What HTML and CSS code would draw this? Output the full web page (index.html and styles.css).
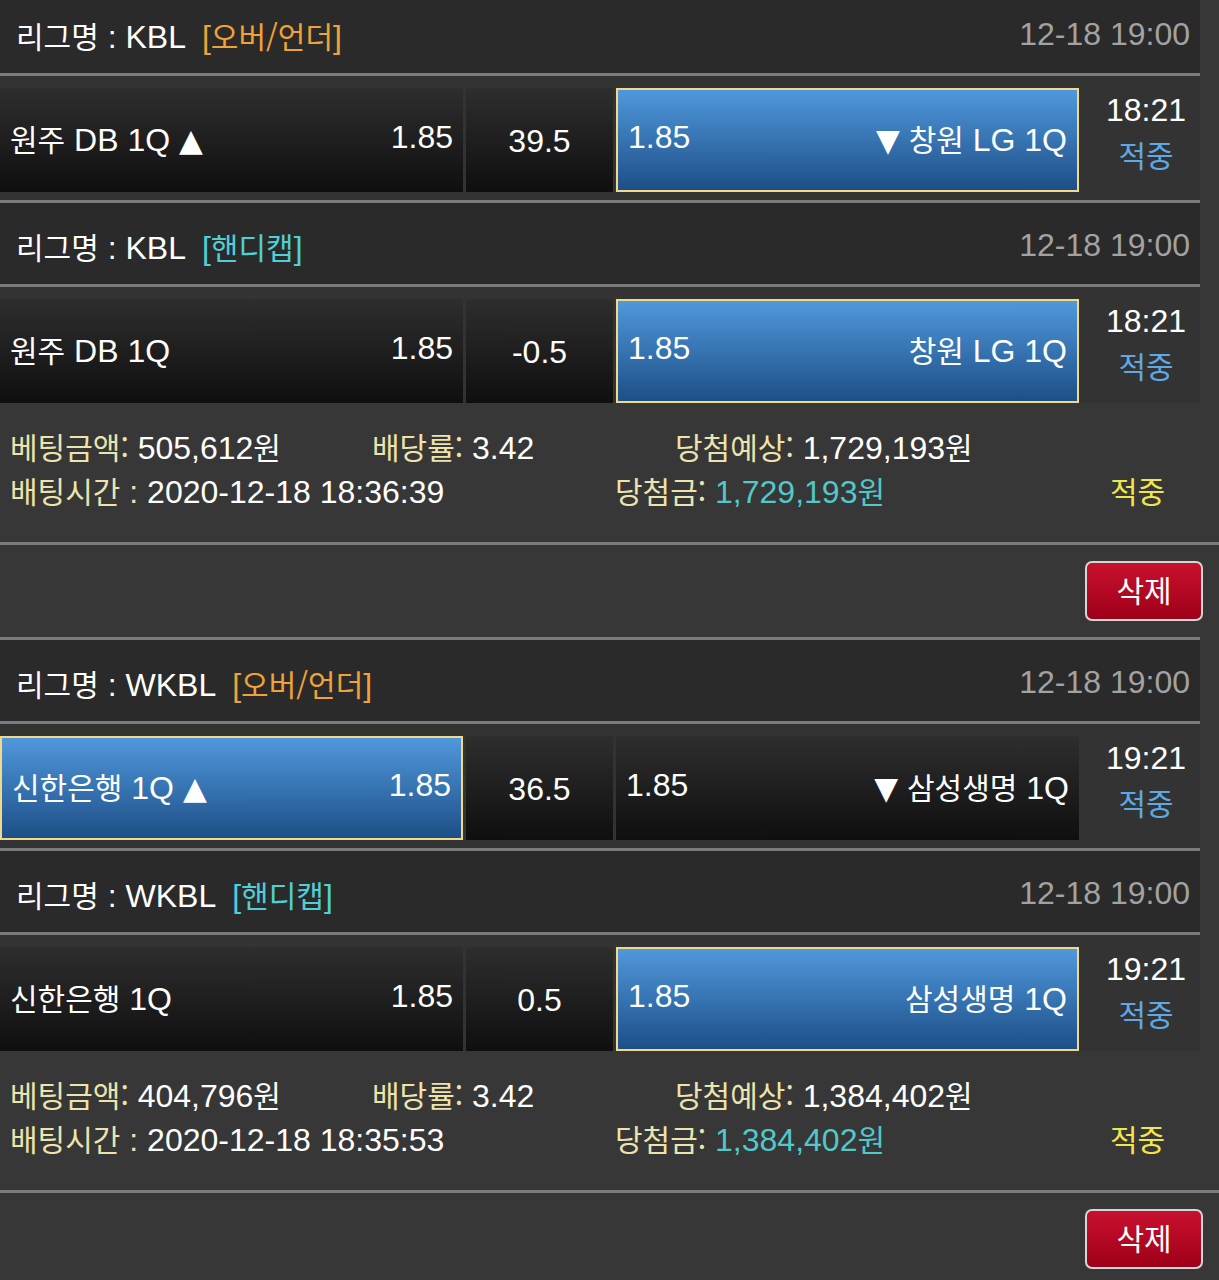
FILE: index.html
```html
<!DOCTYPE html>
<html lang="ko">
  <head>
    <meta charset="UTF-8" />
    <meta name="viewport" content="width=device-width, initial-scale=1.0" />
    <title>배팅내역</title>
    <link rel="stylesheet" href="styles.css">
  </head>
  <body>
    <div class="list">
      <!-- 1번 티켓 -->
      <div class="ticket">
        <div class="game">
          <div class="league">
            <div><span class="ko">리그명</span> : KBL<span class="tag over">[<span class="ko">오버/언더</span>]</span></div>
            <div class="date">12-18 19:00</div>
          </div>
          <div class="match">
            <div class="cell side"><span><span class="ko">원주</span> DB 1Q <span class="tri">▲</span></span><span>1.85</span></div>
            <div class="cell line">39.5</div>
            <div class="cell side pick"><span>1.85</span><span><span class="tri">▼</span> <span class="ko">창원</span> LG 1Q</span></div>
            <div class="clock"><span>18:21</span><span class="ko state">적중</span></div>
          </div>
        </div>
        <div class="game tail">
          <div class="league">
            <div><span class="ko">리그명</span> : KBL<span class="tag handi">[<span class="ko">핸디캡</span>]</span></div>
            <div class="date">12-18 19:00</div>
          </div>
          <div class="match">
            <div class="cell side"><span><span class="ko">원주</span> DB 1Q</span><span>1.85</span></div>
            <div class="cell line">-0.5</div>
            <div class="cell side pick"><span>1.85</span><span><span class="ko">창원</span> LG 1Q</span></div>
            <div class="clock"><span>18:21</span><span class="ko state">적중</span></div>
          </div>
        </div>
        <div class="info">
          <div class="info-row">
            <div class="c-amount"><span class="label ko">베팅금액:</span> 505,612<span class="ko">원</span></div>
            <div class="c-odds"><span class="label ko">배당률:</span> 3.42</div>
            <div><span class="label ko">당첨예상:</span> 1,729,193<span class="ko">원</span></div>
          </div>
          <div class="info-row">
            <div class="c-time"><span class="label ko">배팅시간</span><span class="label"> :</span> 2020-12-18 18:36:39</div>
            <div class="c-win"><span class="label ko">당첨금:</span> <span class="win">1,729,193<span class="ko">원</span></span></div>
            <div class="ko result">적중</div>
          </div>
        </div>
        <div class="actions">
          <button class="delete"><span class="ko">삭제</span></button>
        </div>
      </div>

      <!-- 2번 티켓 -->
      <div class="ticket">
        <div class="game">
          <div class="league">
            <div><span class="ko">리그명</span> : WKBL<span class="tag over">[<span class="ko">오버/언더</span>]</span></div>
            <div class="date">12-18 19:00</div>
          </div>
          <div class="match">
            <div class="cell side pick"><span><span class="ko">신한은행</span> 1Q <span class="tri">▲</span></span><span>1.85</span></div>
            <div class="cell line">36.5</div>
            <div class="cell side"><span>1.85</span><span><span class="tri">▼</span> <span class="ko">삼성생명</span> 1Q</span></div>
            <div class="clock"><span>19:21</span><span class="ko state">적중</span></div>
          </div>
        </div>
        <div class="game tail">
          <div class="league">
            <div><span class="ko">리그명</span> : WKBL<span class="tag handi">[<span class="ko">핸디캡</span>]</span></div>
            <div class="date">12-18 19:00</div>
          </div>
          <div class="match">
            <div class="cell side"><span><span class="ko">신한은행</span> 1Q</span><span>1.85</span></div>
            <div class="cell line">0.5</div>
            <div class="cell side pick"><span>1.85</span><span><span class="ko">삼성생명</span> 1Q</span></div>
            <div class="clock"><span>19:21</span><span class="ko state">적중</span></div>
          </div>
        </div>
        <div class="info">
          <div class="info-row">
            <div class="c-amount"><span class="label ko">베팅금액:</span> 404,796<span class="ko">원</span></div>
            <div class="c-odds"><span class="label ko">배당률:</span> 3.42</div>
            <div><span class="label ko">당첨예상:</span> 1,384,402<span class="ko">원</span></div>
          </div>
          <div class="info-row">
            <div class="c-time"><span class="label ko">배팅시간</span><span class="label"> :</span> 2020-12-18 18:35:53</div>
            <div class="c-win"><span class="label ko">당첨금:</span> <span class="win">1,384,402<span class="ko">원</span></span></div>
            <div class="ko result">적중</div>
          </div>
        </div>
        <div class="actions">
          <button class="delete"><span class="ko">삭제</span></button>
        </div>
      </div>
    </div>
  </body>
</html>
```

FILE: styles.css
```css
* {
  box-sizing: border-box;
}

body {
  margin: 0;
  background-color: #373737;
  color: #fff;
  font-family: "Liberation Sans", "Noto Sans CJK KR", sans-serif;
  font-size: 32px;
}

/* 화면 위쪽이 살짝 잘려 있음 */
.list {
  margin-top: -11px;
}

.ko {
  font-family: "Noto Sans CJK KR", sans-serif;
  font-size: 30px;
}

.tri {
  font-family: "DejaVu Sans", sans-serif;
  font-size: 31px;
}

/* 경기 한 줄 */
.game {
  width: 1200px;
}

.league {
  height: 87px;
  display: flex;
  align-items: center;
  justify-content: space-between;
  padding: 4px 10px 0 16px;
  background-color: #2a2a2a;
  border-top: 3px solid #7b7b7b;
  border-bottom: 3px solid #7b7b7b;
}

.tag {
  margin-left: 16px;
}
.tag.over {
  color: #f0a238;
}
.tag.handi {
  color: #4fcfd6;
}

.date {
  color: #a2a2a2;
}

.match {
  display: flex;
  gap: 3px;
  padding: 12px 0 8px;
  background-color: #333;
}
.game.tail .match {
  padding-bottom: 0;
}

.cell {
  height: 104px;
  display: flex;
  align-items: center;
  padding: 0 10px;
  background: linear-gradient(#2e2e2e, #0f0f0f);
}

.side {
  width: 463px;
  justify-content: space-between;
  padding-bottom: 5px;
}

.line {
  width: 147px;
  justify-content: center;
  padding-top: 2px;
}

/* 선택한 쪽 */
.cell.pick {
  background: linear-gradient(#5098dc, #1d4f87);
  border: 2px solid #f2d98a;
}

.clock {
  flex: 1;
  display: flex;
  flex-direction: column;
  align-items: center;
  padding-left: 10px;
  line-height: 44px;
}
.clock .state {
  color: #5fa8e4;
}

/* 배팅 정보 */
.info {
  height: 142px;
  padding: 21px 0 0 10px;
  line-height: 44px;
  border-bottom: 3px solid #7b7b7b;
}

.info-row {
  display: flex;
  height: 44px;
}

.c-amount {
  width: 362px;
}
.c-odds {
  width: 303px;
}
.c-time {
  width: 605px;
}
.c-win {
  width: 495px;
}

.label {
  color: #ece3ad;
}
.win {
  color: #52c8c8;
}
.result {
  color: #f1e54c;
}

.actions {
  height: 92px;
  display: flex;
  justify-content: flex-end;
  align-items: flex-start;
  padding: 16px 16px 0 0;
}

.delete {
  width: 118px;
  height: 60px;
  border: 2px solid #d6d6d6;
  border-radius: 7px;
  background: linear-gradient(#c8112e, #9f0019);
  color: #fff;
  font-family: inherit;
  font-size: 32px;
  padding: 0 0 4px;
}
```
